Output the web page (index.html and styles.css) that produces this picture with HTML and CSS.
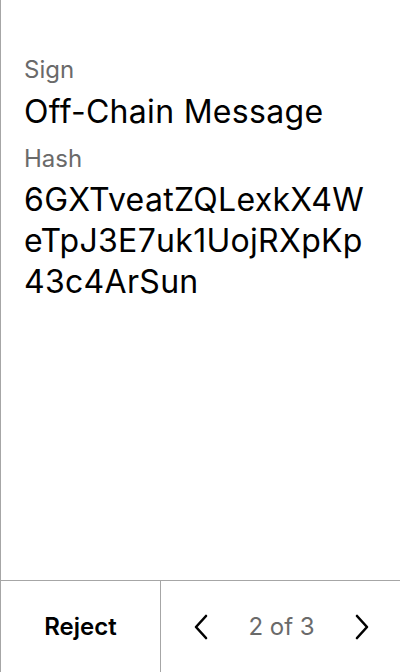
FILE: index.html
```html
<!DOCTYPE html>
<html>
<head>
<meta charset="utf-8">
<link rel="stylesheet" href="styles.css">
</head>
<body>
<div class="screen">
  <main class="content">
    <div class="label">Sign</div>
    <div class="value title">Off-Chain Message</div>
    <div class="label hash-label">Hash</div>
    <div class="value hash"><span class="line">6GXTveatZQLexkX4W</span><span class="line">eTpJ3E7uk1UojRXpKp</span><span class="line">43c4ArSun</span></div>
  </main>
  <footer class="footer">
    <div class="reject">Reject</div>
    <div class="nav">
      <svg class="chev" width="16" height="26" viewBox="0 0 16 26"><path d="M13 2 L3 13 L13 24" fill="none" stroke="#000" stroke-width="2.6" stroke-linecap="round" stroke-linejoin="round"/></svg>
      <span class="page">2 of 3</span>
      <svg class="chev" width="16" height="26" viewBox="0 0 16 26"><path d="M3 2 L13 13 L3 24" fill="none" stroke="#000" stroke-width="2.6" stroke-linecap="round" stroke-linejoin="round"/></svg>
    </div>
  </footer>
</div>
</body>
</html>
```
FILE: styles.css
```css
html, body {
  margin: 0;
  padding: 0;
  background: #fff;
}
body {
  font-family: Inter, "Noto Sans", sans-serif;
  color: #000;
}
.screen {
  width: 400px;
  height: 672px;
  box-sizing: border-box;
  border-left: 1px solid #a6a6a6;
  display: flex;
  flex-direction: column;
}
.content {
  flex: 1;
  padding: 54px 23px 0 23px;
}
.label {
  font-size: 24px;
  line-height: 32px;
  color: #6a6a6a;
}
.value {
  font-size: 32px;
  line-height: 40px;
  letter-spacing: 0.3px;
  color: #000;
}
.title {
  margin-top: 6px;
}
.hash-label {
  margin-top: 11px;
}
.hash {
  margin-top: 4px;
  line-height: 41px;
}
.line {
  display: block;
  white-space: nowrap;
}
.footer {
  height: 92px;
  border-top: 1px solid #a6a6a6;
  display: flex;
  box-sizing: border-box;
}
.reject {
  width: 159px;
  border-right: 1px solid #a6a6a6;
  display: flex;
  align-items: center;
  justify-content: center;
  font-size: 24px;
  font-weight: 600;
}
.nav {
  flex: 1;
  display: flex;
  align-items: center;
  justify-content: space-between;
  padding: 0 30px 0 32px;
}
.page {
  font-size: 24px;
  color: #6a6a6a;
}
```
